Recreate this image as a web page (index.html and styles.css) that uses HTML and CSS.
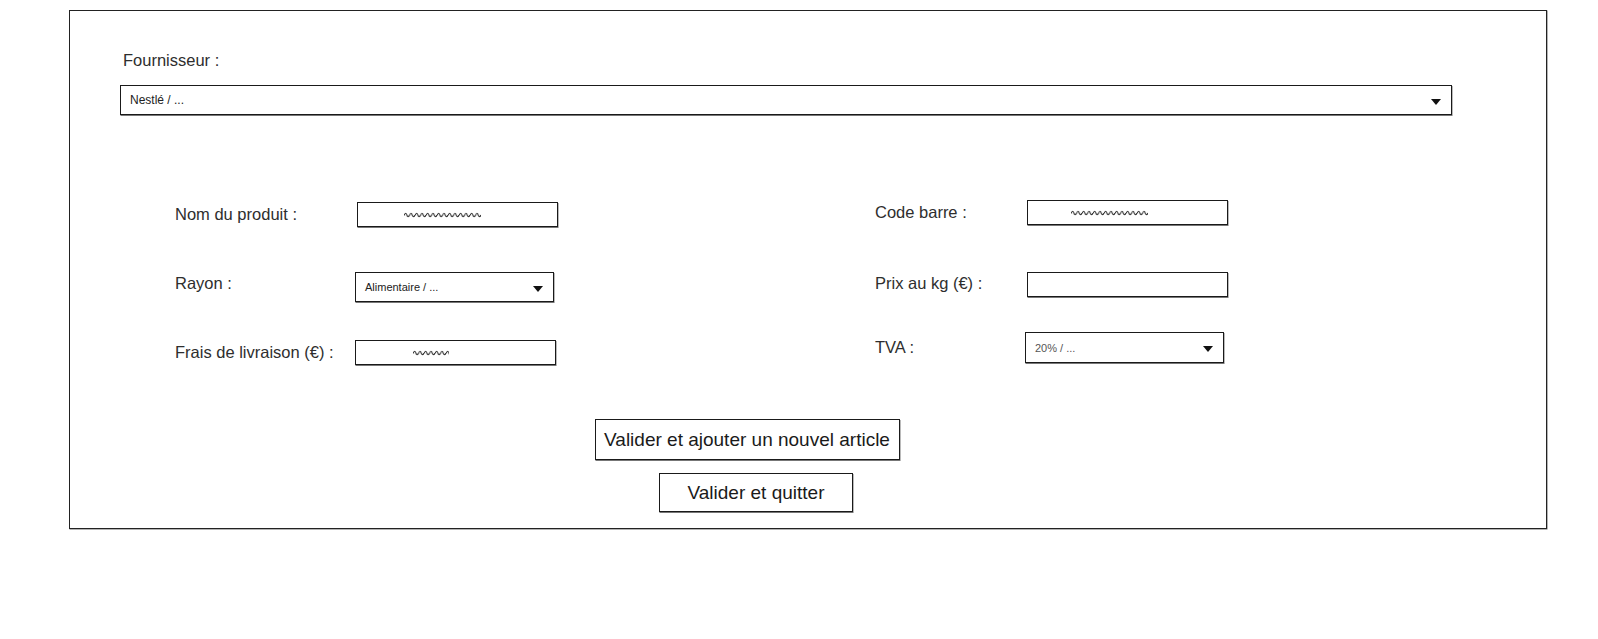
FILE: index.html
```html
<!DOCTYPE html>
<html lang="fr">
<head>
<meta charset="utf-8">
<title>Nouvel article</title>
<link rel="stylesheet" href="styles.css">
</head>
<body>
<svg class="defs" width="0" height="0" aria-hidden="true">
  <defs>
    <pattern id="wave" width="5.5" height="8" patternUnits="userSpaceOnUse">
      <path d="M0 5.5 Q1.4 1.5 2.75 5 T5.5 5" fill="none" stroke="#222" stroke-width="1"/>
    </pattern>
  </defs>
</svg>
<div class="frame">
  <div class="supplier">
    <div class="label">Fournisseur :</div>
    <div class="select wide">
      <span class="value">Nestlé / ...</span>
      <span class="arrow"></span>
    </div>
  </div>

  <div class="form">
    <div class="field left">
      <div class="label">Nom du produit :</div>
      <div class="input h25 w201">
        <svg class="squig" style="margin-left:46px" width="77" height="8"><rect width="77" height="8" fill="url(#wave)"/></svg>
      </div>
    </div>
    <div class="field right up2">
      <div class="label">Code barre :</div>
      <div class="input h25 w201">
        <svg class="squig" style="margin-left:43px" width="77" height="8"><rect width="77" height="8" fill="url(#wave)"/></svg>
      </div>
    </div>

    <div class="field left low">
      <div class="label">Rayon :</div>
      <div class="select small w199">
        <span class="value">Alimentaire / ...</span>
        <span class="arrow"></span>
      </div>
    </div>
    <div class="field right low">
      <div class="label">Prix au kg (€) :</div>
      <div class="input h25 w201"></div>
    </div>

    <div class="field left">
      <div class="label">Frais de livraison (€) :</div>
      <div class="input h25 w201 shift">
        <svg class="squig" style="margin-left:57px" width="36" height="8"><rect width="36" height="8" fill="url(#wave)"/></svg>
      </div>
    </div>
    <div class="field right up5">
      <div class="label">TVA :</div>
      <div class="select small w199 tall">
        <span class="value grey">20% / ...</span>
        <span class="arrow"></span>
      </div>
    </div>
  </div>

  <div class="actions">
    <button class="btn big">Valider et ajouter un nouvel article</button>
    <button class="btn">Valider et quitter</button>
  </div>
</div>
</body>
</html>
```
FILE: styles.css
```css
* { box-sizing: border-box; }
html, body { margin: 0; padding: 0; background: #fff; }
body {
  font-family: "Liberation Sans", Arial, sans-serif;
  color: #2e2e2e;
  width: 1598px;
  height: 639px;
  overflow: hidden;
}
.defs { position: absolute; }
.frame {
  width: 1478px;
  height: 519px;
  margin: 10px 0 0 69px;
  border: 1.5px solid #222;
  box-shadow: 0.5px 0.5px 0 #666;
}
.supplier {
  padding: 40px 0 0 50px;
}
.supplier .label {
  font-size: 16.5px;
  height: 18px;
  line-height: 18px;
  margin-left: 3px;
  margin-bottom: 16px;
}
.select {
  display: flex;
  align-items: center;
  justify-content: space-between;
  border: 1.5px solid #1a1a1a;
  box-shadow: 0.5px 1px 0 #777;
  background: #fff;
}
.select.wide {
  width: 1332px;
  height: 30px;
  padding: 0 10px 0 9px;
}
.select .value { font-size: 12px; color: #222; }
.select .value.grey { color: #555; }
.arrow {
  width: 0;
  height: 0;
  border-left: 5.5px solid transparent;
  border-right: 5.5px solid transparent;
  border-top: 6px solid #111;
  margin-top: 3px;
}
.form {
  margin: 84px 0 0 105px;
  display: grid;
  grid-template-columns: 700px 400px;
  grid-template-rows: 30px 38px 30px;
  row-gap: 35px;
}
.field {
  display: flex;
  align-items: center;
  height: 30px;
}
.field.low {
  align-self: end;
  align-items: flex-start;
}
.field.low .label { line-height: 22px; }
.field.up2 { margin-top: -2px; }
.field.up5 { margin-top: -5px; }
.field .label { font-size: 16.5px; flex: none; }
.field.left .label { width: 182px; }
.field.right .label { width: 152px; }
.input {
  display: flex;
  align-items: center;
  border: 1.5px solid #1a1a1a;
  box-shadow: 0.5px 1px 0 #777;
  background: #fff;
}
.h25 { height: 25px; }
.w201 { width: 201px; }
.w199 { width: 199px; }
.shift { margin-left: -2px; }
.select.small {
  height: 30px;
  padding: 0 10px 0 9px;
  margin-left: -2px;
}
.select.small .value { font-size: 11px; }
.select.tall { height: 31px; margin-top: 1px; }
.squig { display: block; }
.actions {
  width: 1364px;
  margin-top: 52px;
  display: flex;
  flex-direction: column;
  align-items: center;
  gap: 13px;
}
.btn {
  font-family: "Liberation Sans", Arial, sans-serif;
  font-size: 19px;
  color: #1a1a1a;
  background: #fff;
  border: 1.5px solid #1a1a1a;
  box-shadow: 0.5px 1px 0 #777;
  height: 39px;
  width: 194px;
  padding: 0;
  margin-left: 8px;
}
.btn.big {
  width: 305px;
  height: 41px;
  margin-left: -10px;
}
```
